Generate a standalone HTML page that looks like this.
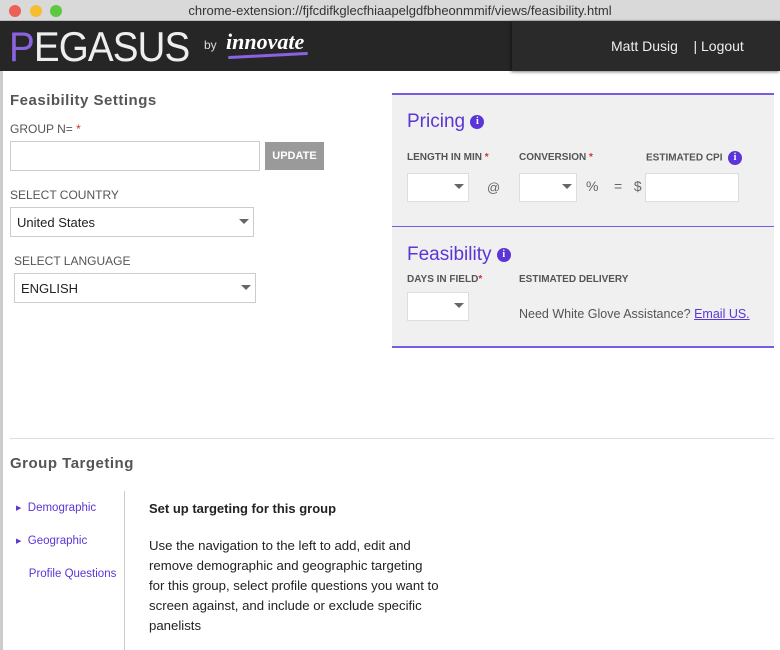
<!DOCTYPE html><html><head><style>
*{margin:0;padding:0;box-sizing:border-box}
body{width:780px;height:650px;overflow:hidden;background:#fff;font-family:"Liberation Sans",sans-serif;position:relative;color:#333}
.a{position:absolute}
.lbl{font-size:12px;color:#555;letter-spacing:0}
.plbl{font-size:10px;font-weight:bold;color:#555}
.req{color:#c33}
.in{background:#fff;border:1px solid #ccc}
.sel{background:#fff;border:1px solid #ddd}
.tri{position:absolute;width:0;height:0;border-left:5px solid transparent;border-right:5px solid transparent;border-top:5px solid #666}
.info{display:inline-block;width:14px;height:14px;border-radius:50%;background:#5b35d5;color:#fff;font-size:10px;font-weight:bold;text-align:center;line-height:14px;font-family:"Liberation Serif",serif;vertical-align:middle}
.pur{color:#5b35d5}
</style></head><body>
<div class="a" style="left:0;top:0;width:780px;height:21px;background:#d9d9d9;border-bottom:1px solid #bbb"></div>
<div class="a" style="left:9px;top:5px;width:12px;height:12px;border-radius:50%;background:#ee5f57"></div>
<div class="a" style="left:30px;top:5px;width:12px;height:12px;border-radius:50%;background:#f5bd2f"></div>
<div class="a" style="left:50px;top:5px;width:12px;height:12px;border-radius:50%;background:#5ec840"></div>
<div class="a" style="left:0;top:3px;width:780px;text-align:center;font-size:13px;color:#333;padding-left:20px">chrome-extension://fjfcdifkglecfhiaapelgdfbheonmmif/views/feasibility.html</div>
<div class="a" style="left:0;top:21px;width:780px;height:50px;background:#262626"></div>
<div class="a" style="left:512px;top:21px;width:268px;height:50px;background:#2a2a2a;box-shadow:-1px 1px 3px rgba(0,0,0,.5)"></div>
<div class="a" style="left:9px;top:23px;font-size:42px;color:#eee;font-weight:normal;transform:scaleX(0.92);transform-origin:left;-webkit-text-stroke:0;letter-spacing:-1px"><span style="color:#8a63e0">P</span>EGASUS</div>
<div class="a" style="left:204px;top:38px;font-size:12px;color:#ddd">by</div>
<div class="a" style="left:226px;top:29px;font-size:22px;color:#fff;font-style:italic;font-weight:bold;font-family:'Liberation Serif',serif">innovate</div>
<div class="a" style="left:228px;top:54px;width:80px;height:3px;background:#8a63e0;border-radius:2px;transform:rotate(-3deg)"></div>
<div class="a" style="left:611px;top:38px;font-size:14px;color:#eee">Matt Dusig &nbsp;&nbsp;&nbsp;| Logout</div>
<div class="a" style="left:0;top:71px;width:3px;height:579px;background:#ccc"></div>

<div class="a" style="left:10px;top:92px;font-size:15px;font-weight:bold;color:#555;letter-spacing:.5px">Feasibility Settings</div>
<div class="a lbl" style="left:10px;top:122px">GROUP N= <span class="req">*</span></div>
<div class="a in" style="left:10px;top:141px;width:250px;height:30px"></div>
<div class="a" style="left:265px;top:142px;width:59px;height:28px;background:#9a9a9a;color:#fff;font-size:11px;font-weight:bold;text-align:center;line-height:28px">UPDATE</div>
<div class="a lbl" style="left:10px;top:188px">SELECT COUNTRY</div>
<div class="a in" style="left:10px;top:207px;width:244px;height:30px"><span style="position:absolute;left:6px;top:7px;font-size:13px;color:#222">United States</span><div class="tri" style="left:228px;top:11px"></div></div>
<div class="a lbl" style="left:14px;top:254px">SELECT LANGUAGE</div>
<div class="a in" style="left:14px;top:273px;width:242px;height:30px"><span style="position:absolute;left:6px;top:7px;font-size:13px;color:#222">ENGLISH</span><div class="tri" style="left:226px;top:11px"></div></div>

<div class="a" style="left:392px;top:93px;width:382px;height:255px;background:#f0f0f0;border-top:2px solid #7b5ce0;border-bottom:2px solid #7b5ce0"></div>
<div class="a" style="left:392px;top:226px;width:382px;height:1px;background:#7b5ce0"></div>
<div class="a pur" style="left:407px;top:111px;font-size:19px">Pricing <span class="info">i</span></div>
<div class="a plbl" style="left:407px;top:152px">LENGTH IN MIN <span class="req">*</span></div>
<div class="a plbl" style="left:519px;top:152px">CONVERSION <span class="req">*</span></div>
<div class="a plbl" style="left:646px;top:151px">ESTIMATED CPI &nbsp;<span class="info">i</span></div>
<div class="a sel" style="left:407px;top:173px;width:62px;height:29px"><div class="tri" style="left:46px;top:10px"></div></div>
<div class="a" style="left:487px;top:180px;font-size:13px;color:#666">@</div>
<div class="a sel" style="left:519px;top:173px;width:58px;height:29px"><div class="tri" style="left:42px;top:10px"></div></div>
<div class="a" style="left:586px;top:178px;font-size:14px;color:#666">%&nbsp;&nbsp;&nbsp;&nbsp;=&nbsp;&nbsp;&nbsp;$</div>
<div class="a sel" style="left:645px;top:173px;width:94px;height:29px"></div>
<div class="a pur" style="left:407px;top:244px;font-size:19px">Feasibility <span class="info">i</span></div>
<div class="a plbl" style="left:407px;top:274px">DAYS IN FIELD<span class="req">*</span></div>
<div class="a plbl" style="left:519px;top:274px">ESTIMATED DELIVERY</div>
<div class="a sel" style="left:407px;top:292px;width:62px;height:29px"><div class="tri" style="left:46px;top:10px"></div></div>
<div class="a" style="left:519px;top:307px;font-size:12.5px;color:#555">Need White Glove Assistance? <span style="color:#5b35d5;text-decoration:underline">Email US.</span></div>

<div class="a" style="left:10px;top:438px;width:764px;height:1px;background:#ddd"></div>
<div class="a" style="left:10px;top:455px;font-size:15px;font-weight:bold;color:#555;letter-spacing:.5px">Group Targeting</div>
<div class="a" style="left:16px;top:492px;font-size:11.5px;color:#5b35d5;line-height:32px"><span style="font-size:7px;vertical-align:1px">▶</span>&nbsp; Demographic<br><span style="font-size:7px;vertical-align:1px">▶</span>&nbsp; Geographic<br>&nbsp;&nbsp;&nbsp;&nbsp;Profile Questions</div>
<div class="a" style="left:124px;top:491px;width:1px;height:159px;background:#ccc"></div>
<div class="a" style="left:149px;top:501px;font-size:13px;font-weight:bold;color:#222">Set up targeting for this group</div>
<div class="a" style="left:149px;top:536px;width:290px;font-size:13.2px;color:#222;line-height:20px">Use the navigation to the left to add, edit and remove demographic and geographic targeting for this group, select profile questions you want to screen against, and include or exclude specific panelists</div>
</body></html>
